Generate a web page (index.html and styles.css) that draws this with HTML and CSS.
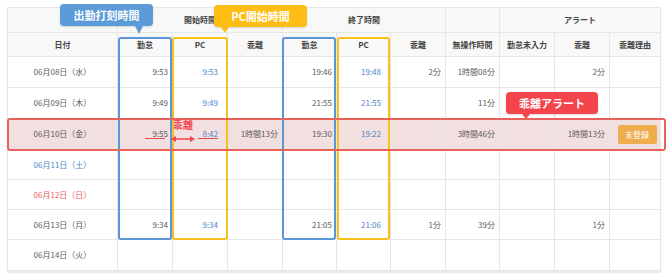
FILE: index.html
```html
<!DOCTYPE html>
<html lang="ja">
<head>
<meta charset="utf-8">
<link rel="stylesheet" href="styles.css">
</head>
<body>
<div class="stage">
  <table class="grid">
    <colgroup>
      <col class="c-date"><col class="c55"><col class="c55"><col class="c55"><col class="c54"><col class="c54"><col class="c55"><col class="c54"><col class="c55"><col class="c55"><col class="c51">
    </colgroup>
    <thead>
      <tr class="h1">
        <th></th>
        <th colspan="3">開始時間</th>
        <th colspan="3">終了時間</th>
        <th></th>
        <th colspan="3">アラート</th>
      </tr>
      <tr class="h2">
        <th>日付</th>
        <th>勤怠</th><th>PC</th><th>乖離</th>
        <th>勤怠</th><th>PC</th><th>乖離</th>
        <th>無操作時間</th>
        <th>勤怠未入力</th><th>乖離</th><th>乖離理由</th>
      </tr>
    </thead>
    <tbody>
      <tr class="r31">
        <td class="date">06月08日（水）</td>
        <td>9:53</td><td class="pc">9:53</td><td></td>
        <td>19:46</td><td class="pc">19:48</td><td>2分</td>
        <td>1時間08分</td>
        <td></td><td>2分</td><td></td>
      </tr>
      <tr class="r31">
        <td class="date">06月09日（木）</td>
        <td>9:49</td><td class="pc">9:49</td><td></td>
        <td>21:55</td><td class="pc">21:55</td><td></td>
        <td>11分</td>
        <td></td><td></td><td></td>
      </tr>
      <tr class="r31 alert">
        <td class="date">06月10日（金）</td>
        <td>9:55</td><td class="pc">8:42</td><td>1時間13分</td>
        <td>19:30</td><td class="pc">19:22</td><td></td>
        <td>3時間46分</td>
        <td></td><td>1時間13分</td><td class="btn-cell"><span class="btn">未登録</span></td>
      </tr>
      <tr class="r30">
        <td class="date sat">06月11日（土）</td>
        <td></td><td></td><td></td><td></td><td></td><td></td><td></td><td></td><td></td><td></td>
      </tr>
      <tr class="r30">
        <td class="date sun">06月12日（日）</td>
        <td></td><td></td><td></td><td></td><td></td><td></td><td></td><td></td><td></td><td></td>
      </tr>
      <tr class="r30">
        <td class="date">06月13日（月）</td>
        <td>9:34</td><td class="pc">9:34</td><td></td>
        <td>21:05</td><td class="pc">21:06</td><td>1分</td>
        <td>39分</td>
        <td></td><td>1分</td><td></td>
      </tr>
      <tr class="r31">
        <td class="date">06月14日（火）</td>
        <td></td><td></td><td></td><td></td><td></td><td></td><td></td><td></td><td></td><td></td>
      </tr>
    </tbody>
  </table>

  <div class="frame blue f1"></div>
  <div class="frame blue f2"></div>
  <div class="frame yellow f3"></div>
  <div class="frame yellow f4"></div>
  <div class="rowframe"></div>

  <div class="note-label">乖離</div>
  <svg class="note-arrow" width="24" height="8" viewBox="0 0 24 8">
    <line x1="3" y1="4" x2="21" y2="4" stroke="#f0454d" stroke-width="1.5"/>
    <polygon points="0,4 5,1 5,7" fill="#f0454d"/>
    <polygon points="24,4 19,1 19,7" fill="#f0454d"/>
  </svg>
  <div class="uline u1"></div>
  <div class="uline u2"></div>

  <div class="callout c-blue">出勤打刻時間</div>
  <div class="callout c-yellow">PC開始時間</div>
  <div class="callout c-red">乖離アラート</div>
</div>
</body>
</html>
```

FILE: styles.css
```css
html, body {
  margin: 0;
  padding: 0;
  background: #ffffff;
}

.stage {
  position: relative;
  width: 670px;
  height: 277px;
  overflow: hidden;
  font-family: "Noto Sans CJK JP", "Noto Sans", sans-serif;
  color: #5a5a5a;
}

.grid {
  margin: 7px 0 0 7px;
  width: 653px;
  table-layout: fixed;
  border-collapse: collapse;
  font-size: 8px;
  box-shadow: 0 2px 1px rgba(0, 0, 0, 0.08);
}

.c-date { width: 110px; }
.c55 { width: 55px; }
.c54 { width: 54px; }
.c51 { width: 51px; }

.grid th,
.grid td {
  border: 1px solid #e6e6e6;
  padding: 0 4px 0 0;
  white-space: nowrap;
  line-height: 10px;
}

.grid th {
  background: #f8f8f8;
  color: #444444;
  font-weight: bold;
  text-align: center;
  padding: 0;
}

.h1 { height: 25px; }
.h2 { height: 24px; }
.r31 { height: 31px; }
.r30 { height: 30px; }

.grid td {
  text-align: right;
  background: #ffffff;
}

.grid td.date {
  text-align: center;
  padding: 0;
}

.grid td.pc {
  color: #4b86c9;
  padding-right: 9px;
}

.grid td.sat { color: #4b86c9; }
.grid td.sun { color: #f05a5a; }

.grid tr.alert td {
  background: #f2dfe0;
}

.grid td.btn-cell {
  text-align: center;
  padding: 0 0 0 4px;
}

.btn {
  display: inline-block;
  width: 39px;
  height: 19px;
  line-height: 19px;
  background: #f0ad4e;
  color: #ffffff;
  border-radius: 2px;
  font-size: 8px;
  text-align: center;
}

/* overlays */
.frame {
  position: absolute;
  top: 37px;
  height: 199px;
  border-radius: 3px;
  border: 2px solid;
}

.blue { border-color: #5b96d8; }
.yellow { border-color: #f9bf1a; }

.f1 { left: 118px; width: 50px; }
.f2 { left: 282px; width: 50px; }
.f3 { left: 172px; width: 52px; }
.f4 { left: 337px; width: 49px; }

.rowframe {
  position: absolute;
  left: 7px;
  top: 118px;
  width: 655px;
  height: 29px;
  border: 2px solid #e8615a;
  border-radius: 3px;
}

.note-label {
  position: absolute;
  left: 173px;
  top: 119px;
  font-size: 10px;
  font-weight: bold;
  color: #f0454d;
  line-height: 12px;
}

.note-arrow {
  position: absolute;
  left: 171px;
  top: 135px;
}

.uline {
  position: absolute;
  top: 138px;
  height: 1px;
  width: 20px;
  background: #f0454d;
}

.u1 { left: 145px; }
.u2 { left: 198px; }

.callout {
  position: absolute;
  height: 22px;
  line-height: 22px;
  padding: 0;
  text-align: center;
  color: #ffffff;
  font-size: 11px;
  font-weight: bold;
  border-radius: 4px;
  box-shadow: 0 1px 2px rgba(0, 0, 0, 0.15);
}

.callout::after {
  content: "";
  position: absolute;
  top: 100%;
  width: 0;
  height: 0;
  border-left: 4px solid transparent;
  border-right: 4px solid transparent;
  border-top: 8px solid;
}

.c-blue {
  left: 60px;
  top: 4px;
  width: 93px;
  background: #5b9bd9;
}
.c-blue::after {
  left: 75px;
  border-top-color: #5b9bd9;
}

.c-yellow {
  left: 214px;
  top: 5px;
  width: 93px;
  background: #fdbd12;
}
.c-yellow::after {
  left: 7px;
  border-top-width: 6px;
  border-top-color: #fdbd12;
}

.c-red {
  left: 506px;
  top: 92px;
  width: 92px;
  background: #f5454c;
}
.c-red::after {
  left: 16px;
  border-top-width: 5px;
  border-top-color: #f5454c;
}
```
